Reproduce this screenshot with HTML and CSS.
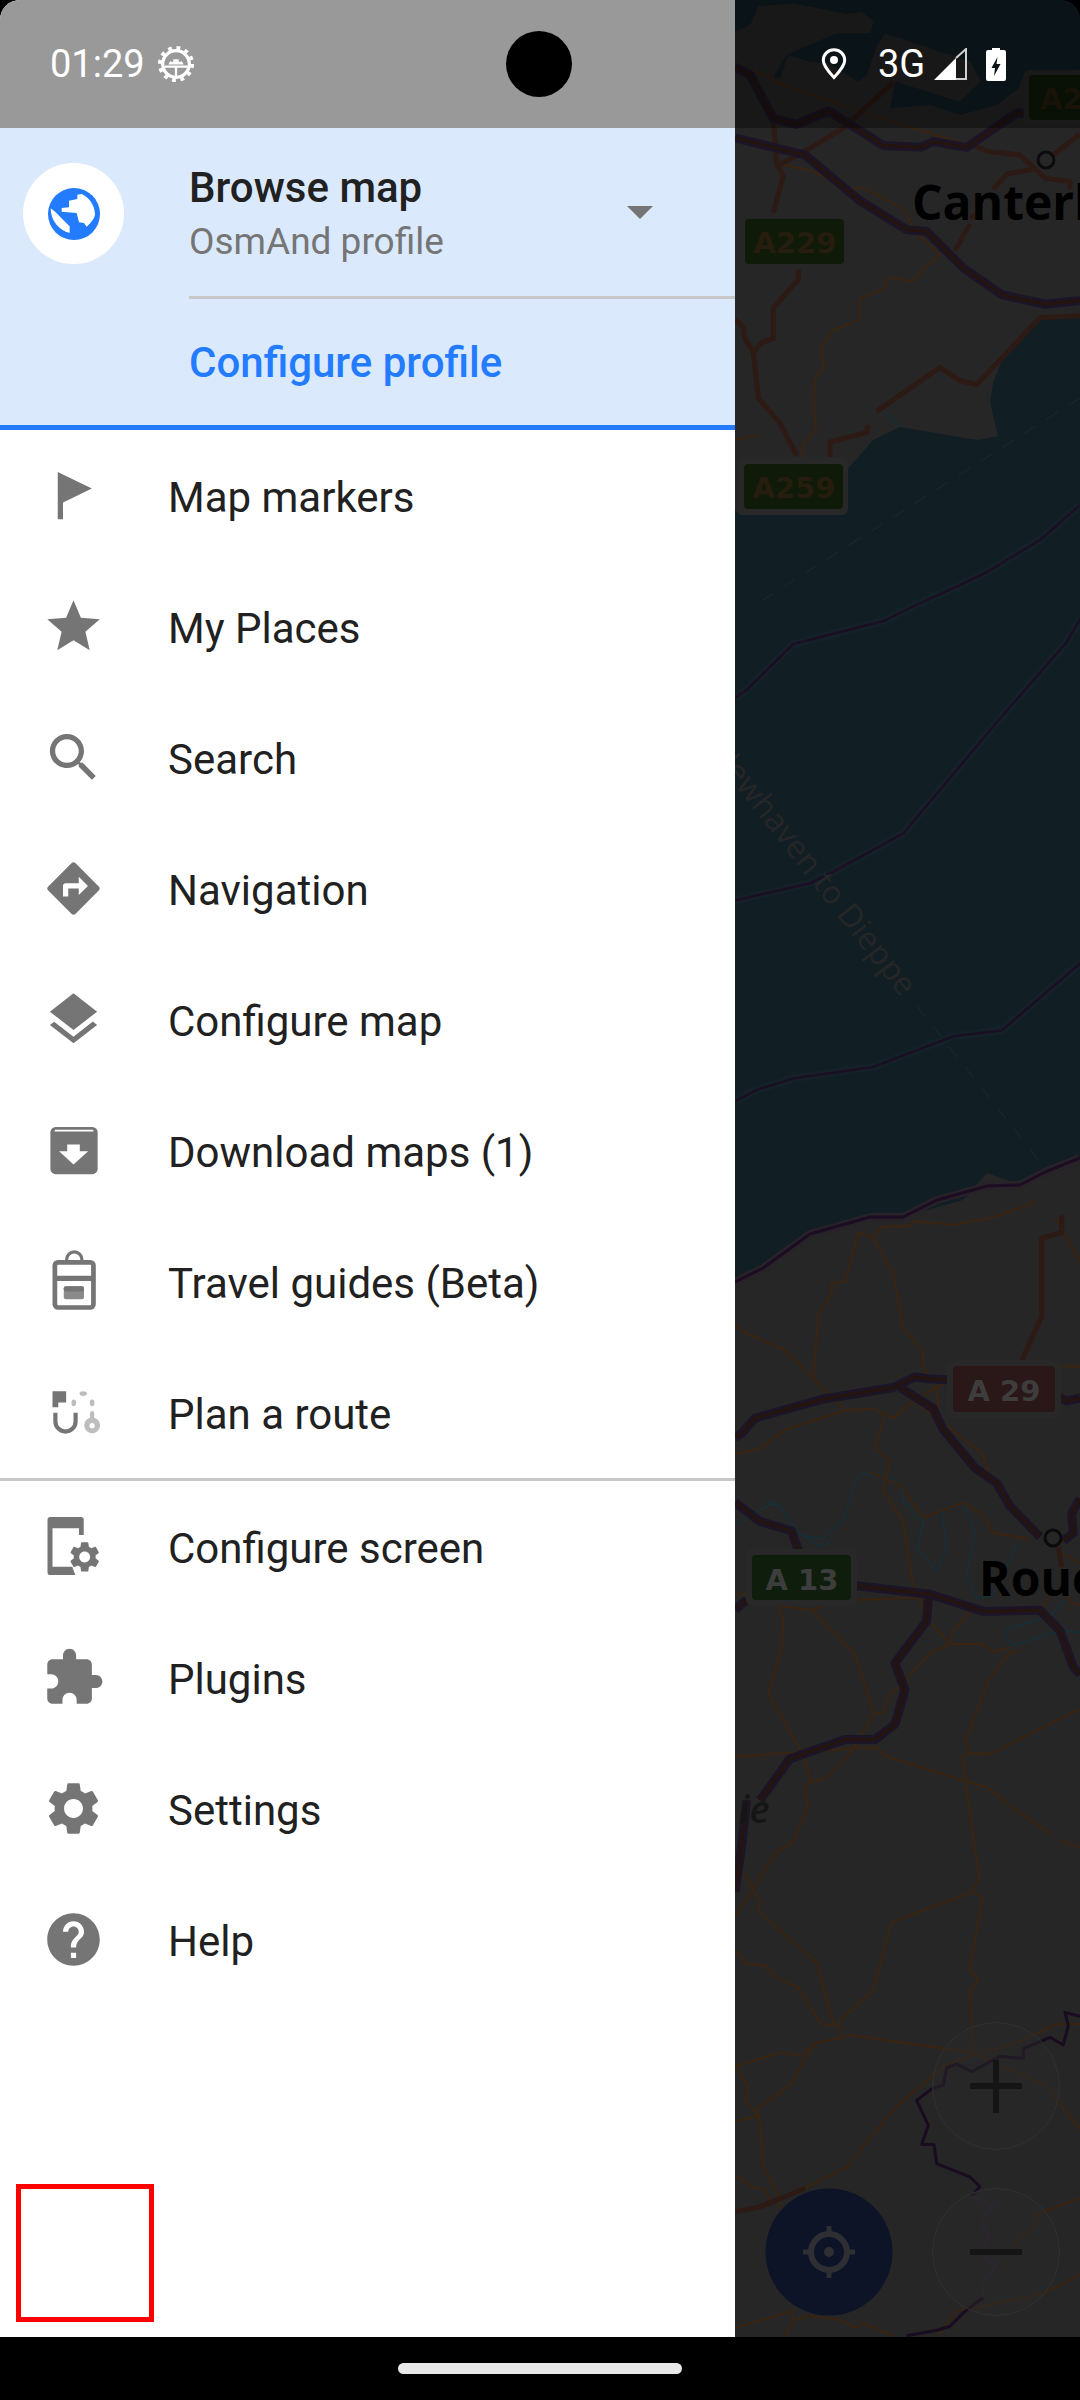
FILE: index.html
```html
<!DOCTYPE html>
<html lang="en">
<head>
<meta charset="utf-8">
<title>OsmAnd menu</title>
<link rel="stylesheet" href="styles.css">
</head>
<body>
<div class="screen">
  <div class="main">
    <svg class="map" viewBox="0 0 1080 2337" xmlns="http://www.w3.org/2000/svg" aria-hidden="true">
      <defs>
        <g id="motorways">
          <g transform="translate(730,0) scale(.3333,.3827)">
            <path class="r" d="M15,175 L60,195 L130,310 L200,325 L295,290 L460,380 L570,385 L610,370 L710,385 L860,295 L880,295"/>
            <path class="r" d="M15,360 L130,385 L225,405 L390,525 L530,600 L590,605 L700,700 L815,770 L945,795 L1050,785"/>
          </g>
          <g transform="translate(730,1200) scale(.3333,.3827)">
            <path class="r" d="M15,620 L35,610 L75,570 L280,520 L490,490 L555,462 L600,468 L655,470"/>
            <path class="r" d="M985,515 L1010,525 L1050,518"/>
            <path class="r" d="M510,490 L610,545 L640,600 L735,700 L800,740 L840,800 L930,880"/>
            <path class="r" d="M15,790 L90,840 L185,865 L205,915"/>
            <path class="r" d="M380,1008 L600,1030 L760,1075 L930,1072 L990,1125 L1030,1220 L1050,1240"/>
            <path class="r" d="M595,1040 L590,1100 L495,1210 L525,1280 L495,1370 L435,1410 L345,1410 L180,1460 L90,1568"/>
            <path class="r" d="M15,1070 L50,1045"/>
            <path class="r" d="M1000,890 L1030,870 L1025,820 L1050,780"/>
          </g>
          <g transform="translate(730,1800) scale(.3333,.3827)">
            <path class="r" d="M50,0 L35,120 L15,240"/>
          </g>
        </g>
      </defs>

      <rect class="land" width="1080" height="2337"/>
      <!-- sea -->
      <path class="sea" d="M1080,317 L1040,320 L1006,350 L993,383 L990,402 L998,436 L977,440 L900,427 L873,440 L847,470 L843,515 L740,515 L735,510 V1282 L763,1268 L810,1234 L870,1217 L903,1217 L963,1200 L987,1173 L1020,1185 L1045,1172 L1080,1158 Z"/>
      <g transform="translate(730,0) scale(.3333)">
        <path class="sea" d="M15,0 H1050 V215 H885 L865,265 L800,315 L690,345 L600,315 L480,325 L497,245 L690,305 L752,245 L722,185 L465,100 L440,140 L410,225 L385,245 L350,225 L300,190 L240,185 L175,165 L150,235 L130,230 L170,165 L320,100 L420,100 L432,65 L395,35 L350,42 L190,10 L85,18 L60,75 L15,95 Z"/>
      </g>
      <!-- coast -->
      <path class="coastH r" d="M1080,1158 L1045,1172 L1020,1185 L987,1186 L937,1200 L903,1217 L870,1217 L810,1234 L763,1268 L735,1282"/>
      <path class="coast r" d="M1080,1158 L1045,1172 L1020,1185 L987,1186 L937,1200 L903,1217 L870,1217 L810,1234 L763,1268 L735,1282"/>
      <!-- lines at sea -->
      <g transform="translate(730,600) scale(.3333,.3827)">
        <path class="seaH r" d="M15,255 L50,235 L190,115 L460,55 L590,0"/>
        <path class="seaH r" d="M15,785 L240,740 L310,710 L520,610 L800,320 L1010,110 L1050,50"/>
        <path class="seaH r" d="M15,1310 L80,1280 L190,1250 L430,1220 L670,1140 L815,1125 L1050,950"/>
        <path class="seaL r" d="M15,255 L50,235 L190,115 L460,55 L590,0"/>
        <path class="seaL r" d="M15,785 L240,740 L310,710 L520,610 L800,320 L1010,110 L1050,50"/>
        <path class="seaL r" d="M15,1310 L80,1280 L190,1250 L430,1220 L670,1140 L815,1125 L1050,950"/>
        <path class="ferry r" d="M560,1060 L950,1490"/>
      </g>
      <path class="seaH r" d="M1080,505 L1040,540 L987,572 L960,585 L927,600"/>
      <path class="seaL r" d="M1080,505 L1040,540 L987,572 L960,585 L927,600"/>
      <path class="ferry r" d="M1080,398 L763,600"/>
      <text class="ferryText" transform="translate(901,998) rotate(52)" text-anchor="end">Newhaven to Dieppe</text>

      <!-- rivers -->
      <g transform="translate(730,1200) scale(.3333,.3827)">
        <path class="river r" d="M15,850 L120,795 L145,795 L210,875 L280,885 L345,830 L380,725 L400,715 L480,725 L515,750 L520,790 L580,840 L560,910 L620,970 L650,910 L635,810 L700,790 L735,870 L710,985 L740,1040 L790,1035 L860,900"/>
        <path class="river r" d="M110,785 L145,795"/>
        <path class="river r" d="M215,875 L270,905 L300,895"/>
        <path class="river r" d="M1005,1045 L960,1090 L830,1120 L825,1135 L845,1165 L990,1125 L1050,1130"/>
      </g>
      <g transform="translate(730,0) scale(.3333,.3827)">
        <path class="river r" d="M465,1075 L510,1115"/>
      </g>

      <!-- small roads -->
      <g transform="translate(730,0) scale(.3333,.3827)">
        <path class="thin r" d="M50,180 L120,200 L140,215 L400,295 L720,380"/>
        <path class="thin r" d="M160,432 L240,445 L360,495 L400,490 L520,545 L560,610 L630,665 L545,735 L475,725 L460,755 L390,780 L388,835 L305,865 L272,910 L282,955 L258,985 L250,1040 L258,1120 L220,1160 L215,1195"/>
        <path class="thin r" d="M15,1150 L90,1135"/>
      </g>
      <g transform="translate(730,1200) scale(.3333,.3827)">
        <path class="thin r" d="M15,325 L40,345 L160,390 L250,465 L345,550"/>
        <path class="thin r" d="M250,465 L265,300 L305,245 V215 L345,215 L385,85 L430,98 L455,70 L540,68 L550,55 L670,65 L790,45 L905,10 V0"/>
        <path class="thin r" d="M430,98 L490,195 L520,335 L578,395 V430 L600,470 L620,500 L625,540 L610,560"/>
        <path class="thin r" d="M15,665 L90,650 L165,600 L345,550 L430,545 L490,570 L550,525 L650,475"/>
        <path class="thin r" d="M465,560 L435,650 L480,680 L460,760 L520,840 L545,990 L560,1030 L590,1095 L660,1160 L755,1160 L790,1180 L840,1170"/>
        <path class="thin r" d="M420,712 L510,745 L580,830 L700,790 L755,820 L790,870 L900,885"/>
        <path class="thin r" d="M550,525 L620,570 L755,660 L780,720"/>
        <path class="thin r" d="M985,435 H1050"/>
        <path class="thin r" d="M870,1180 L845,1178 L775,1255 L707,1415 L718,1445 L780,1448 L1050,1330"/>
        <path class="thin r" d="M697,1455 L718,1445 M697,1455 L715,1568"/>
        <path class="thin r" d="M15,1455 L215,1442 L440,1430 L470,1455 L770,1535 L825,1568"/>
        <path class="thin r" d="M215,1442 L115,1290 L155,1170 L160,1100 L145,1060 L245,1072 L375,1185 L430,1340 L460,1340 L470,1305 L600,1185 L660,1160 L665,1130 L720,1075"/>
        <path class="thin r" d="M245,1072 L280,1060 M380,1045 L600,1038"/>
        <path class="thin r" d="M430,1345 L365,1440 L290,1510 L228,1525 V1568 M215,1442 L245,1520"/>
        <path class="thin r" d="M15,1030 H50 M955,1040 L935,1070"/>
        <path class="thin r" d="M985,905 L1010,1020 L1020,1050 L1050,1060 M1000,925 L1050,950"/>
        <path class="thin r" d="M1000,85 L1050,160 M975,50 L1000,75"/>
      </g>
      <g transform="translate(730,1800) scale(.3333,.3827)">
        <path class="thin r" d="M15,165 L40,190 L90,265 L85,290 L260,425 L310,585"/>
        <path class="thin r" d="M15,305 L140,135 L190,110 L232,20 V0"/>
        <path class="thin r" d="M15,390 L50,428 L105,432 L135,462 L205,490 L272,585 L330,590 L330,618"/>
        <path class="thin r" d="M715,0 L748,205 L725,240 L485,320 L430,495 L320,585"/>
        <path class="thin r" d="M725,240 L758,255 L718,445 L745,470 L718,505 L730,650 L725,660"/>
        <path class="thin r" d="M15,697 L148,660 L215,668 L255,635 L365,615 L725,660 L945,745 L1050,860"/>
        <path class="thin r" d="M255,635 L180,745 L80,808 L90,840 L98,955 L150,1040 L150,1070"/>
        <path class="thin r" d="M15,697 L55,750 L45,785 L85,825 M15,840 L85,825"/>
        <path class="thin r" d="M815,0 L965,90 M990,105 L1050,125"/>
        <path class="thin r" d="M15,980 L70,1012 L105,1018 L120,1045"/>
        <path class="thin r" d="M200,1025 L350,960 L500,800 L650,690 L870,630 L985,585 H1050"/>
        <path class="thin r" d="M850,1160 L915,1115 V1085 L1050,1040"/>
        <path class="thin r" d="M720,1330 L940,1290 L1050,1240"/>
        <path class="thin r" d="M15,1380 L185,1335 L190,1360 L165,1400 M190,1360 L240,1348 L330,1358 L378,1380 L395,1365 L490,1400"/>
        <path class="thin r" d="M625,1400 L680,1335 L720,1330"/>
      </g>

      <!-- medium roads -->
      <g transform="translate(730,0) scale(.3333,.3827)">
        <path class="brown r" d="M720,375 L770,395 L870,405 L920,445 L945,465 L1020,475 L1020,495"/>
        <path class="brown r" d="M920,440 L830,455 L790,495"/>
        <path class="brown r" d="M970,405 L1050,350"/>
        <path class="brown r" d="M130,310 L140,430 L160,460 L130,555"/>
        <path class="brown r" d="M150,430 L215,400 L340,335 L440,255 L490,215"/>
        <path class="brown r" d="M205,705 V730 L130,805 L130,885 L95,895 L70,920 L45,885 L40,855 L15,835"/>
        <path class="brown r" d="M70,920 L85,1040 L150,1105 L200,1190"/>
        <path class="brown r" d="M415,1110 L410,1130 L300,1155 L300,1195"/>
        <path class="brown r" d="M440,1075 L630,960 L690,995 L740,1005 L930,830 L1050,825"/>
        <path class="brown r" d="M675,655 L720,585 M750,555 L720,570"/>
      </g>
      <g transform="translate(730,1200) scale(.3333,.3827)">
        <path class="brown r" d="M875,420 L935,305 V100 L995,85 V40"/>
        <path class="brown r" d="M985,905 L995,960"/>
      </g>
      <g transform="translate(730,1800) scale(.3333,.3827)">
        <path class="brown r" d="M15,1075 L85,1065 L225,1015"/>
      </g>

      <use href="#motorways" class="mwCase"/>
      <use href="#motorways" class="mwCore"/>

      <!-- border -->
      <g transform="translate(730,1800) scale(.3333,.3827)">
        <path class="border r" d="M1050,565 L1005,555 L1015,590 L1000,640 L960,620 L935,630 L880,650 L880,675 L810,670 L725,710 L680,690 L650,700 L640,745 L605,755 L560,785 L595,850 L575,900 L612,900 L620,950 L720,985 L750,1010 L725,1035"/>
        <path class="borderDim r" d="M725,1035 L790,1060 L750,1100 L775,1140 L755,1190 L800,1215 L755,1265 L760,1300"/>
        <path class="border r" d="M760,1300 L700,1340 L660,1375 L625,1385 L530,1400"/>
      </g>

      <!-- towns -->
      <ellipse class="town" cx="1046" cy="160" rx="8" ry="8"/>
      <ellipse class="town" cx="1053" cy="1538" rx="8" ry="8"/>
      <text class="city" x="912" y="220">Canterbury</text>
      <text class="city" x="979" y="1596">Rouen</text>
      <text class="region" x="739" y="1823">ie</text>

      <!-- shields -->
      <rect class="halo" x="1024" y="70" width="70" height="56" rx="6"/>
      <rect class="shG" x="1029" y="75" width="60" height="45" rx="4"/>
      <text class="shT" x="1040" y="109">A2</text>
      <rect class="shG" x="745" y="219" width="99" height="45" rx="4"/>
      <text class="shT mid" x="795" y="253">A229</text>
      <rect class="halo" x="738" y="457" width="110" height="58" rx="6"/>
      <rect class="shG" x="744" y="464" width="99" height="45" rx="4"/>
      <text class="shT mid" x="794" y="498">A259</text>
      <rect class="halo" x="947" y="1360" width="114" height="58" rx="6"/>
      <rect class="shR" x="953" y="1366" width="102" height="46" rx="4"/>
      <text class="shL mid" x="1004" y="1401">A 29</text>
      <rect class="halo" x="746" y="1549" width="111" height="57" rx="6"/>
      <rect class="shG2" x="752" y="1555" width="99" height="45" rx="4"/>
      <text class="shL mid" x="802" y="1590">A 13</text>

      <!-- map buttons -->
      <circle class="mapBtn" cx="996" cy="2086" r="63.5"/>
      <path class="mapGlyph" d="M970,2083h52v6h-52z M993,2060h6v53h-6z"/>
      <circle class="mapBtn" cx="996" cy="2252" r="63.5"/>
      <path class="mapGlyph" d="M970,2249h52v6h-52z"/>
      <circle class="locBtn" cx="829" cy="2252" r="63.5"/>
      <circle class="locRing" cx="829" cy="2252" r="18"/>
      <circle class="locDot" cx="829" cy="2252" r="5"/>
      <path class="locDot" d="M826.500,2226h5v10h-5z M826.500,2268h5v10h-5z M803,2249.500h10v5h-10z M845,2249.500h10v5h-10z"/>
    </svg>

    <nav class="drawer">
      <header class="profile">
        <div class="avatar">
          <svg class="globe" viewBox="0 0 210 210" aria-hidden="true">
            <circle cx="105" cy="105" r="78" fill="#237bff"/>
            <path fill="#fff" d="M128,45 L115,47 L115,60 L90,65 L90,85 L68,87 L68,98 L113,102 L120,130 L135,132 L143,143 C155,132 168,118 168,105 C168,80 150,55 128,45Z"/>
            <path fill="#fff" d="M35,88 L50,100 L75,125 L92,142 L92,162 C60,155 35,125 35,88Z"/>
          </svg>
        </div>
        <div class="details">
          <div class="titles">
            <div class="names">
              <div class="pname">Browse map</div>
              <div class="ptype">OsmAnd profile</div>
            </div>
            <span class="caret"></span>
          </div>
          <div class="configure">Configure profile</div>
        </div>
      </header>

      <ul class="menu">
        <li class="item"><svg class="ic" viewBox="0 0 24 24"><path d="M6 3 19 9.300 8 14.700V21H6Z"/></svg><span>Map markers</span></li>
        <li class="item"><svg class="ic" viewBox="0 0 24 24"><path d="M12 17.270 18.180 21l-1.640-7.030L22 9.240l-7.190-.61L12 2 9.190 8.630 2 9.240l5.460 4.730L5.820 21z"/></svg><span>My Places</span></li>
        <li class="item"><svg class="ic" viewBox="0 0 24 24"><path d="M15.500 14h-.79l-.28-.27C15.410 12.590 16 11.110 16 9.500 16 5.910 13.090 3 9.500 3S3 5.910 3 9.500 5.910 16 9.500 16c1.610 0 3.090-.59 4.230-1.570l.27.28v.79l5 4.990L20.490 19l-4.990-5zm-6 0C7.010 14 5 11.990 5 9.500S7.010 5 9.500 5 14 7.010 14 9.500 11.990 14 9.500 14z"/></svg><span>Search</span></li>
        <li class="item"><svg class="ic" viewBox="0 0 24 24"><path d="M21.710 11.290l-9-9c-.39-.39-1.020-.39-1.410 0l-9 9c-.39.39-.39 1.020 0 1.410l9 9c.39.39 1.020.39 1.410 0l9-9c.39-.38.39-1.010 0-1.410zM14 14.500V12h-4v3H8v-4c0-.55.45-1 1-1h5V7.500l3.500 3.500-3.500 3.500z"/></svg><span>Navigation</span></li>
        <li class="item"><svg class="ic" viewBox="0 0 24 24"><path d="M11.990 18.540l-7.370-5.730L3 14.070l9 7 9-7-1.630-1.270-7.380 5.740zM12 16l7.360-5.730L21 9l-9-7-9 7 1.630 1.270L12 16z"/></svg><span>Configure map</span></li>
        <li class="item"><svg class="ic" viewBox="0 0 24 24"><rect x="3.200" y="3" width="18" height="18" rx="2"/><path class="wht" d="M5 4.100h14.400l.3.700H4.700zM9.600 9.700h4.800v2.600h3.200L12 17.300 6.500 12.300h3.100z"/></svg><span>Download maps (1)</span></li>
        <li class="item"><svg class="ic" viewBox="0 0 24 24"><circle class="strk" cx="12.300" cy="3.600" r="2.900"/><rect class="strk2" x="4.900" y="4.700" width="14.700" height="17.200" rx="1.200"/><path d="M4.500 9.800H20V11a.8.800 0 0 1-.8.800H5.300a.8.800 0 0 1-.8-.8z"/><rect class="gry" x="8.300" y="13.800" width="7.700" height="5" rx=".8"/><rect x="8.300" y="13.800" width="7.700" height="2" rx=".8"/></svg><span>Travel guides (Beta)</span></li>
        <li class="item"><svg class="ic" viewBox="0 0 24 24"><path d="M4 3.900h5.200v4.300H6.200V10H4z"/><path class="strk3" d="M5.100 12.100v3.300a3.850 3.850 0 0 0 7.700 0v-3.300"/><g class="lite"><ellipse cx="12.100" cy="8.300" rx=".9" ry="1.300"/><ellipse cx="15.700" cy="4.800" rx="1.400" ry=".9"/><ellipse cx="19.100" cy="8.300" rx=".9" ry="1.300"/><path d="M18.300 12.200a.8.800 0 0 1 1.600 0V14a3 3 0 1 1-1.600 0zM19.100 16a1 1 0 1 0 0 2 1 1 0 0 0 0-2z" fill-rule="evenodd"/></g></svg><span>Plan a route</span></li>
      </ul>
      <ul class="menu second">
        <li class="item"><svg class="ic" viewBox="0 0 24 24"><path d="M3.200 .8h11.700a1 1 0 0 1 1 1V7.600h-1.800V5H4V19.700h7.500l1.200 3.200H3.200a1.100 1.100 0 0 1-1.100-1.100V1.900A1.100 1.100 0 0 1 3.200 .8z"/><g transform="translate(9.300,9) scale(.58)"><path d="M19.140 12.940c.04-.3.06-.61.06-.94 0-.32-.02-.64-.07-.94l2.030-1.580c.18-.14.23-.41.12-.61l-1.920-3.320c-.12-.22-.37-.29-.59-.22l-2.390.96c-.5-.38-1.030-.7-1.620-.94l-.36-2.540c-.04-.24-.24-.41-.48-.41h-3.840c-.24 0-.43.17-.47.41l-.36 2.540c-.59.24-1.130.57-1.620.94l-2.390-.96c-.22-.08-.47 0-.59.22L2.740 8.870c-.12.21-.08.47.12.61l2.030 1.580c-.05.3-.09.63-.09.94s.02.64.07.94l-2.030 1.580c-.18.14-.23.41-.12.61l1.920 3.320c.12.22.37.29.59.22l2.390-.96c.5.38 1.030.7 1.620.94l.36 2.540c.05.24.24.41.48.41h3.840c.24 0 .44-.17.47-.41l.36-2.540c.59-.24 1.130-.56 1.620-.94l2.390.96c.22.08.47 0 .59-.22l1.920-3.320c.12-.22.07-.47-.12-.61l-2.010-1.580zM12 15.600c-1.980 0-3.600-1.620-3.600-3.600s1.620-3.600 3.600-3.600 3.600 1.620 3.600 3.600-1.620 3.600-3.600 3.600z"/></g></svg><span>Configure screen</span></li>
        <li class="item"><svg class="ic" viewBox="0 0 24 24"><path d="M20.500 11H19V7c0-1.100-.9-2-2-2h-4V3.500C13 2.120 11.880 1 10.500 1S8 2.120 8 3.500V5H4c-1.100 0-1.990.9-1.990 2v3.800H3.500c1.490 0 2.700 1.210 2.700 2.700s-1.210 2.700-2.700 2.700H2V20c0 1.100.9 2 2 2h3.800v-1.500c0-1.490 1.210-2.700 2.700-2.700 1.490 0 2.700 1.210 2.700 2.700V22H17c1.100 0 2-.9 2-2v-4h1.500c1.380 0 2.500-1.120 2.500-2.500S21.880 11 20.500 11z"/></svg><span>Plugins</span></li>
        <li class="item"><svg class="ic" viewBox="0 0 24 24"><path d="M19.140 12.940c.04-.3.06-.61.06-.94 0-.32-.02-.64-.07-.94l2.030-1.580c.18-.14.23-.41.12-.61l-1.920-3.320c-.12-.22-.37-.29-.59-.22l-2.390.96c-.5-.38-1.030-.7-1.620-.94l-.36-2.540c-.04-.24-.24-.41-.48-.41h-3.840c-.24 0-.43.17-.47.41l-.36 2.540c-.59.24-1.130.57-1.620.94l-2.390-.96c-.22-.08-.47 0-.59.22L2.740 8.870c-.12.21-.08.47.12.61l2.030 1.580c-.05.3-.09.63-.09.94s.02.64.07.94l-2.030 1.580c-.18.14-.23.41-.12.61l1.920 3.320c.12.22.37.29.59.22l2.390-.96c.5.38 1.030.7 1.620.94l.36 2.540c.05.24.24.41.48.41h3.840c.24 0 .44-.17.47-.41l.36-2.540c.59-.24 1.130-.56 1.620-.94l2.390.96c.22.08.47 0 .59-.22l1.920-3.320c.12-.22.07-.47-.12-.61l-2.010-1.580zM12 15.600c-1.980 0-3.600-1.620-3.600-3.600s1.620-3.600 3.600-3.600 3.600 1.620 3.600 3.600-1.620 3.600-3.600 3.600z"/></svg><span>Settings</span></li>
        <li class="item"><svg class="ic" viewBox="0 0 24 24"><path d="M12 2C6.480 2 2 6.480 2 12s4.480 10 10 10 10-4.480 10-10S17.520 2 12 2zm1 17h-2v-2h2v2zm2.070-7.750l-.9.92C13.450 12.900 13 13.500 13 15h-2v-.5c0-1.100.45-2.100 1.170-2.830l1.240-1.260c.37-.36.59-.86.59-1.410 0-1.100-.9-2-2-2s-2 .9-2 2H8c0-2.210 1.790-4 4-4s4 1.790 4 4c0 .88-.36 1.680-.93 2.250z"/></svg><span>Help</span></li>
      </ul>
      <div class="redbox"></div>
    </nav>

    <div class="scrim"></div>
    <div class="status">
      <div class="stat-left">
        <span class="time">01:29</span>
        <svg class="bug" viewBox="-20 -20 40 40" aria-hidden="true">
          <circle class="bugRing" r="14"/>
          <circle class="bugTeeth" r="17"/>
          <path class="bugFill" d="M-8,0.500 a8.500 8.500 0 0 1 16,0 z M-12,1.500h24v2.400h-24z M-1.200,3h2.400v10h-2.400z"/>
          <circle class="bugEye" cx="-4" cy="-3.500" r="1.300"/>
          <circle class="bugEye" cx="4" cy="-3.500" r="1.300"/>
        </svg>
      </div>
      <div class="stat-right">
        <svg class="pin" viewBox="0 0 26 32" aria-hidden="true"><path class="pinO" d="M13 1.800C6.900 1.800 2.300 6.400 2.300 12.300 2.300 18.500 13 29.500 13 29.500S23.700 18.500 23.700 12.300C23.700 6.400 19.100 1.800 13 1.800Z"/><circle class="pinD" cx="13" cy="12" r="4"/></svg>
        <span class="net">3G</span>
        <svg class="sig" viewBox="0 0 33 32" aria-hidden="true"><path class="sigF" d="M0 32 22 10V32Z"/><path class="sigO" d="M22 10 32 1V31H22"/></svg>
        <svg class="bat" viewBox="0 0 20 33" aria-hidden="true"><path class="sigF" d="M6 0H14V2H18a2 2 0 0 1 2 2V31a2 2 0 0 1-2 2H2a2 2 0 0 1-2-2V4a2 2 0 0 1 2-2H6Z"/><path class="bolt" d="M11.500 9 5.500 20H9L8 28 14.500 16H10.500Z"/></svg>
      </div>
    </div>
    <div class="camera"></div>
  </div>
  <div class="navbar"><div class="homebar"></div></div>
</div>
</body>
</html>
```
FILE: styles.css
```css
* { box-sizing: border-box; }
html, body { margin: 0; padding: 0; background: #000; }
body { width: 1080px; height: 2400px; overflow: hidden; font-family: Roboto, "Noto Sans", sans-serif; }
ul { list-style: none; margin: 0; padding: 0; }

.screen { width: 1080px; height: 2400px; display: flex; flex-direction: column; }
.main { position: relative; height: 2337px; display: flex; overflow: hidden; border-radius: 20px 20px 0 0; }
.navbar { height: 63px; background: #000; display: flex; justify-content: center; padding-top: 26px; }
.homebar { width: 284px; height: 11px; border-radius: 6px; background: #e8e8e8; }

/* map */
.map { position: absolute; left: 0; top: 0; width: 1080px; height: 2337px; }
.r { fill: none; vector-effect: non-scaling-stroke; stroke-linejoin: round; }
.land { fill: #262626; }
.sea { fill: #111f25; }
.coastH { stroke: #282229; stroke-width: 8; }
.coast { stroke: #1c0d22; stroke-width: 3; }
.seaH { stroke: #18222c; stroke-width: 8; opacity: .7; }
.seaL { stroke: #1b1023; stroke-width: 2.500; }
.ferry { stroke: #17262d; stroke-width: 1.500; stroke-dasharray: 14 12; }
.ferryText { font: 32px "Open Sans", sans-serif; fill: #252625; }
.river { stroke: #153038; stroke-width: 1.500; }
.thin { stroke: #3a2410; stroke-width: 2; }
.brown { stroke: #2d1a15; stroke-width: 5; }
.mwCase { stroke: #1c1528; stroke-width: 9; }
.mwCore { stroke: #241410; stroke-width: 3.500; }
.border { stroke: #1a0c20; stroke-width: 3; }
.borderDim { stroke: #2d2433; stroke-width: 2.500; }
.town { fill: none; stroke: #0b0b0b; stroke-width: 3; }
.city { font: 700 48px "Open Sans", sans-serif; fill: #000; }
.region { font: italic 600 38px "Open Sans", sans-serif; fill: #151515; }
.halo { fill: #282828; }
.shG { fill: #0f1a08; }
.shG2 { fill: #0f1d0d; }
.shR { fill: #2a1717; }
.shT { font: 700 29px "DejaVu Sans", sans-serif; fill: #261d0e; }
.shL { font: 700 29px "DejaVu Sans", sans-serif; fill: #3d3d3d; }
.mid { text-anchor: middle; }
.mapBtn { fill: #2a2a2a; fill-opacity: .45; stroke: #303030; stroke-width: 1; }
.mapGlyph { fill: #151515; }
.locBtn { fill: #0d1428; }
.locRing { fill: none; stroke: #2e2f33; stroke-width: 6; }
.locDot { fill: #2e2f33; }

/* drawer */
.drawer { position: relative; width: 735px; height: 100%; background: #fff; display: flex; flex-direction: column; padding-top: 128px; }
.profile { display: grid; grid-template-columns: 189px 1fr; padding-top: 35px; background: #dbe9fd; border-bottom: 5px solid #237bff; height: 302px; }
.avatar { width: 101px; height: 101px; margin-left: 23px; border-radius: 50%; background: #fff; display: flex; align-items: center; justify-content: center; }
.globe { width: 70px; height: 70px; }
.titles { height: 136px; border-bottom: 3px solid #c8c8c8; display: flex; justify-content: space-between; padding-right: 82px; }
.pname { font-size: 42px; font-weight: 500; color: #212121; line-height: 50px; }
.ptype { font-size: 37px; color: #757575; line-height: 50px; margin-top: 4px; }
.caret { width: 0; height: 0; margin-top: 43px; border-left: 13px solid transparent; border-right: 13px solid transparent; border-top: 13px solid #757575; }
.configure { height: 126px; line-height: 128px; font-size: 42px; font-weight: 500; color: #237bff; }
.menu { display: flex; flex-direction: column; }
.second { border-top: 3px solid #c8c8c8; }
.item { height: 131px; display: flex; align-items: center; padding-left: 42px; gap: 63px; font-size: 42px; color: #212121; }
.item span { padding-top: 3px; }
.ic { width: 63px; height: 63px; fill: #757575; flex: none; }
.wht { fill: #fff; }
.strk { fill: none; stroke: #757575; stroke-width: 1.200; }
.strk2 { fill: #fff; stroke: #757575; stroke-width: 1.800; }
.strk3 { fill: none; stroke: #757575; stroke-width: 1.600; }
.gry { fill: #8a8a8a; }
.lite { fill: #bdbdbd; }
.redbox { width: 138px; height: 138px; border: 5px solid #ff0000; margin: auto 0 15px 16px; }

/* status */
.scrim { position: absolute; left: 735px; top: 0; right: 0; height: 128px; background: rgba(0,0,0,.37); }
.status { position: absolute; left: 0; top: 0; right: 0; height: 128px; display: flex; justify-content: space-between; align-items: center; padding: 0 74px 0 50px; color: #fff; }
.drawer::before { content: ""; position: absolute; left: 0; top: 0; right: 0; height: 128px; background: #999; }
.stat-left { display: flex; align-items: center; gap: 12px; }
.stat-right { display: flex; align-items: center; }
.time { font-size: 38px; }
.bug { width: 38px; height: 38px; }
.bugRing { fill: none; stroke: #fff; stroke-width: 3.500; }
.bugTeeth { fill: none; stroke: #fff; stroke-width: 4; stroke-dasharray: 4 4.900; }
.bugFill { fill: #fff; }
.bugEye { fill: #999; }
.pin { width: 26px; height: 32px; margin-right: 31px; }
.pinO { fill: none; stroke: #fff; stroke-width: 3; }
.pinD { fill: #fff; }
.net { font-size: 38px; width: 47px; margin-right: 9px; }
.sig { width: 33px; height: 32px; margin-right: 19px; }
.sigF { fill: #fff; }
.sigO { fill: none; stroke: #d0d0d0; stroke-width: 2; }
.bat { width: 20px; height: 33px; }
.bolt { fill: #0a1214; }
.camera { position: absolute; left: 506px; top: 31px; width: 66px; height: 66px; border-radius: 50%; background: #000; }
```
